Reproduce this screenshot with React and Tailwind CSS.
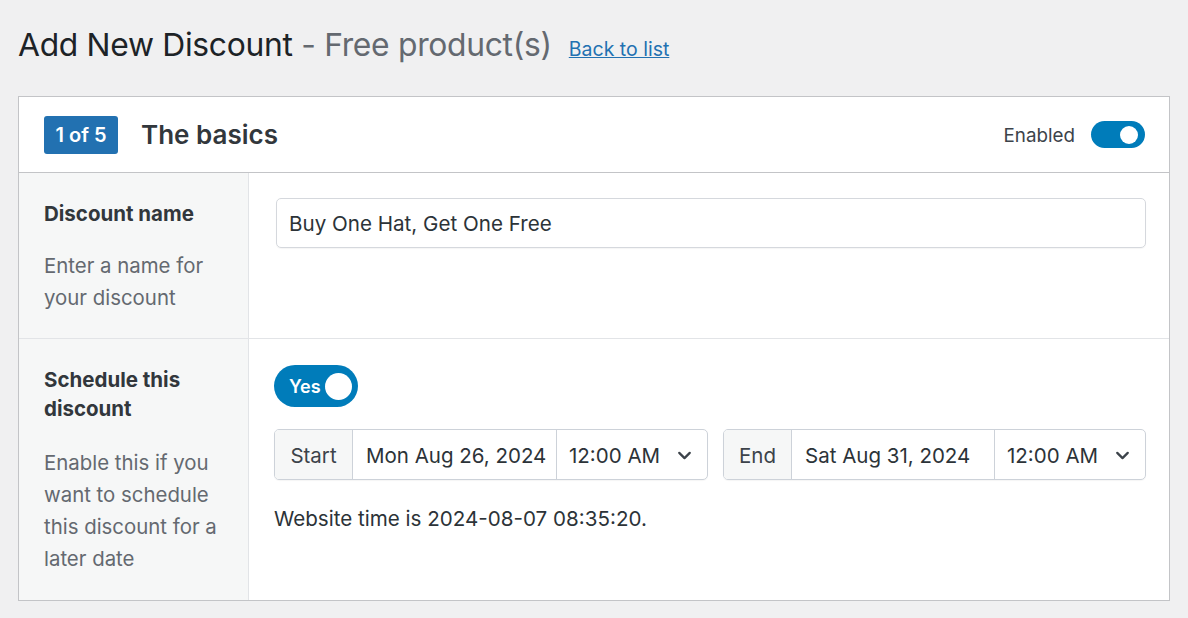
import { ChevronDown } from 'lucide-react'

function Switch({ label, size = 'sm' }) {
  if (size === 'lg') {
    return (
      <div className="w-[84px] h-[42px] rounded-full bg-[#007cba] flex items-center justify-between pl-[15px] pr-[6px]">
        <span className="text-white font-semibold text-[18px]">{label}</span>
        <span className="w-[27px] h-[27px] rounded-full bg-white" />
      </div>
    )
  }
  return (
    <div className="w-[54px] h-[27px] rounded-full bg-[#007cba] flex items-center justify-end pr-[7px]">
      <span className="w-[18px] h-[18px] rounded-full bg-white" />
    </div>
  )
}

function DateRange({ label, date, labelW, dateW }) {
  return (
    <div className="flex h-[51px] border border-[#cdd2d9] rounded-[5px] overflow-hidden text-[20.5px] text-[#2c3338] shadow-[0_1px_1px_rgba(0,0,0,0.04)]">
      <div
        className={`${labelW} bg-[#f6f7f7] border-r border-[#cdd2d9] flex items-center justify-center pt-[4px] text-[#3c434a]`}
      >
        {label}
      </div>
      <div className={`${dateW} border-r border-[#cdd2d9] flex items-center pl-[13px] pt-[4px] whitespace-nowrap`}>
        {date}
      </div>
      <div className="w-[150px] flex items-center pl-[12px] pr-[12px]">
        <span className="w-[96px] pt-[4px] overflow-hidden whitespace-nowrap">12:00 AM (UTC)</span>
        <ChevronDown className="ml-auto mt-[2px] text-[#3c434a]" size={21} strokeWidth={2.6} />
      </div>
    </div>
  )
}

export default function App() {
  return (
    <div className="min-h-screen bg-[#f0f0f1] px-[18px] pt-[25px] font-['Inter',sans-serif] text-[#1d2327]">
      <div className="flex items-baseline gap-[17px]">
        <h1 className="text-[31.8px] leading-[40px] tracking-[-0.3px]">
          Add New Discount <span className="text-[#646970]">- Free product(s)</span>
        </h1>
        <a href="#" className="text-[19.5px] text-[#2271b1] underline">
          Back to list
        </a>
      </div>

      <div className="mt-[31px] bg-white border border-[#c3c4c7]">
        <div className="h-[76px] flex items-center justify-between pl-[25px] pr-[24px] border-b border-[#c3c4c7]">
          <div className="flex items-center gap-[23px]">
            <span className="h-[38px] w-[74px] justify-center flex items-center rounded-[3px] bg-[#2271b1] text-white font-semibold text-[20px]">
              1 of 5
            </span>
            <h2 className="text-[26px] font-semibold text-[#32373c]">The basics</h2>
          </div>
          <div className="flex items-center gap-[16px]">
            <span className="text-[18.8px] pt-[3px] text-[#3c434a]">Enabled</span>
            <Switch />
          </div>
        </div>

        <div className="flex border-b border-[#e2e4e7]">
          <div className="w-[230px] shrink-0 bg-[#f6f7f7] border-r border-[#e2e4e7] px-[25px] pt-[26px] pb-[24px]">
            <div className="text-[20.5px] leading-[29px] font-bold text-[#32373c]">Discount name</div>
            <p className="mt-[22px] text-[20.4px] leading-[32px] text-[#646970]">Enter a name for your discount</p>
          </div>
          <div className="flex-1 pl-[27px] pr-[23px] pt-[25px]">
            <div className="h-[50px] border border-[#d5d8dd] rounded-[5px] flex items-center px-[12px] pt-[3px] text-[20.6px] text-[#2c3338] shadow-[0_1px_1px_rgba(0,0,0,0.04)]">
              Buy One Hat, Get One Free
            </div>
          </div>
        </div>

        <div className="flex">
          <div className="w-[230px] shrink-0 bg-[#f6f7f7] border-r border-[#e2e4e7] px-[25px] pt-[26px] pb-[25px]">
            <div className="text-[20.5px] leading-[29px] font-bold text-[#32373c]">Schedule this discount</div>
            <p className="mt-[24px] text-[20.4px] leading-[32px] text-[#646970]">
              Enable this if you want to schedule this discount for a later date
            </p>
          </div>
          <div className="flex-1 pl-[25px] pr-[24px] pt-[26px]">
            <Switch size="lg" label="Yes" />
            <div className="mt-[22px] flex gap-[15px]">
              <DateRange label="Start" date="Mon Aug 26, 2024" labelW="w-[78px]" dateW="w-[204px]" />
              <DateRange label="End" date="Sat Aug 31, 2024" labelW="w-[68px]" dateW="w-[203px]" />
            </div>
            <p className="mt-[24px] text-[20.6px] leading-[29px] text-[#2c3338]">Website time is 2024-08-07 08:35:20.</p>
          </div>
        </div>
      </div>
    </div>
  )
}
